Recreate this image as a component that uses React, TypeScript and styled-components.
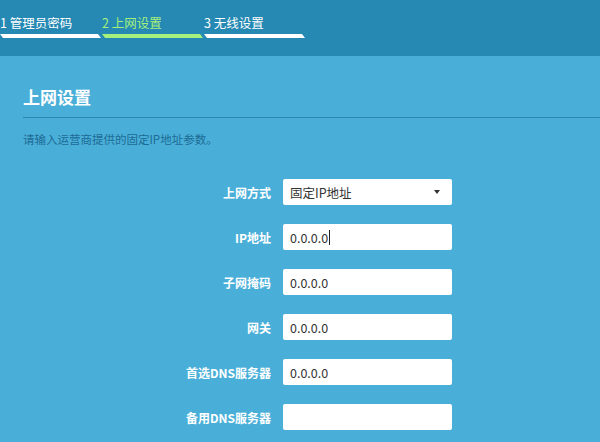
import React from 'react';
import styled, { createGlobalStyle } from 'styled-components';

const GlobalStyle = createGlobalStyle`
  html, body {
    margin: 0;
    padding: 0;
    background: #4aafd8;
    font-family: "Noto Sans CJK SC", "Noto Sans", sans-serif;
  }
`;

const Page = styled.div`
  width: 600px;
  height: 442px;
  overflow: hidden;
  background: #4aafd8;
`;

const Header = styled.div`
  height: 56px;
  background: #2589b3;
  display: flex;
  gap: 1px;
  padding-top: 14px;
  box-sizing: border-box;
`;

const Step = styled.div`
  width: 101px;
  display: flex;
  flex-direction: column;
`;

const StepLabel = styled.div<{ $active: boolean }>`
  font-size: 12.5px;
  line-height: 18px;
  height: 20px;
  color: ${({ $active }) => ($active ? '#a6f07c' : '#ffffff')};
`;

const StepBar = styled.div<{ $active: boolean }>`
  height: 4px;
  background: ${({ $active }) => ($active ? '#a6f07c' : '#ffffff')};
  clip-path: polygon(0 0, calc(100% - 3px) 0, 100% 100%, 3px 100%);
`;

const Content = styled.div`
  padding-left: 23px;
`;

const Title = styled.h2`
  margin: 0;
  padding-top: 29px;
  font-size: 17px;
  line-height: 24px;
  font-weight: 700;
  color: #ffffff;
`;

const Divider = styled.div`
  margin-top: 8px;
  height: 1px;
  background: #2a86b2;
`;

const Description = styled.p`
  margin: 13px 0 0;
  font-size: 11.5px;
  line-height: 16px;
  color: #1d6b95;
`;

const Form = styled.div`
  margin-top: 32px;
  display: flex;
  flex-direction: column;
  gap: 19px;
`;

const Row = styled.div`
  display: flex;
  align-items: center;
  height: 26px;
`;

const Label = styled.label`
  width: 248px;
  text-align: right;
  font-size: 12px;
  font-weight: 700;
  color: #ffffff;
  margin-right: 12px;
`;

const Field = styled.div`
  width: 169px;
  height: 26px;
  background: #ffffff;
  border-radius: 2px;
  box-sizing: border-box;
  padding: 0 7px;
  display: flex;
  align-items: center;
  font-size: 12.5px;
  color: #333333;
`;

const SelectField = styled(Field)`
  justify-content: space-between;
  padding-right: 12px;
`;

const Caret = styled.span`
  width: 0;
  height: 0;
  border-left: 3.5px solid transparent;
  border-right: 3.5px solid transparent;
  border-top: 4px solid #333333;
`;

const Cursor = styled.span`
  display: inline-block;
  width: 1px;
  height: 15px;
  background: #222;
  margin-left: 1px;
  vertical-align: middle;
`;

const steps = ['1 管理员密码', '2 上网设置', '3 无线设置'];

const rows = [
  { label: 'IP地址', value: '0.0.0.0', cursor: true },
  { label: '子网掩码', value: '0.0.0.0' },
  { label: '网关', value: '0.0.0.0' },
  { label: '首选DNS服务器', value: '0.0.0.0' },
  { label: '备用DNS服务器', value: '' },
];

const App: React.FC = () => (
  <Page>
    <GlobalStyle />
    <Header>
      {steps.map((s, i) => (
        <Step key={s}>
          <StepLabel $active={i === 1}>{s}</StepLabel>
          <StepBar $active={i === 1} />
        </Step>
      ))}
    </Header>
    <Content>
      <Title>上网设置</Title>
      <Divider />
      <Description>请输入运营商提供的固定IP地址参数。</Description>
      <Form>
        <Row>
          <Label>上网方式</Label>
          <SelectField>
            固定IP地址
            <Caret />
          </SelectField>
        </Row>
        {rows.map(r => (
          <Row key={r.label}>
            <Label>{r.label}</Label>
            <Field>
              {r.value}
              {r.cursor && <Cursor />}
            </Field>
          </Row>
        ))}
      </Form>
    </Content>
  </Page>
);

export default App;
